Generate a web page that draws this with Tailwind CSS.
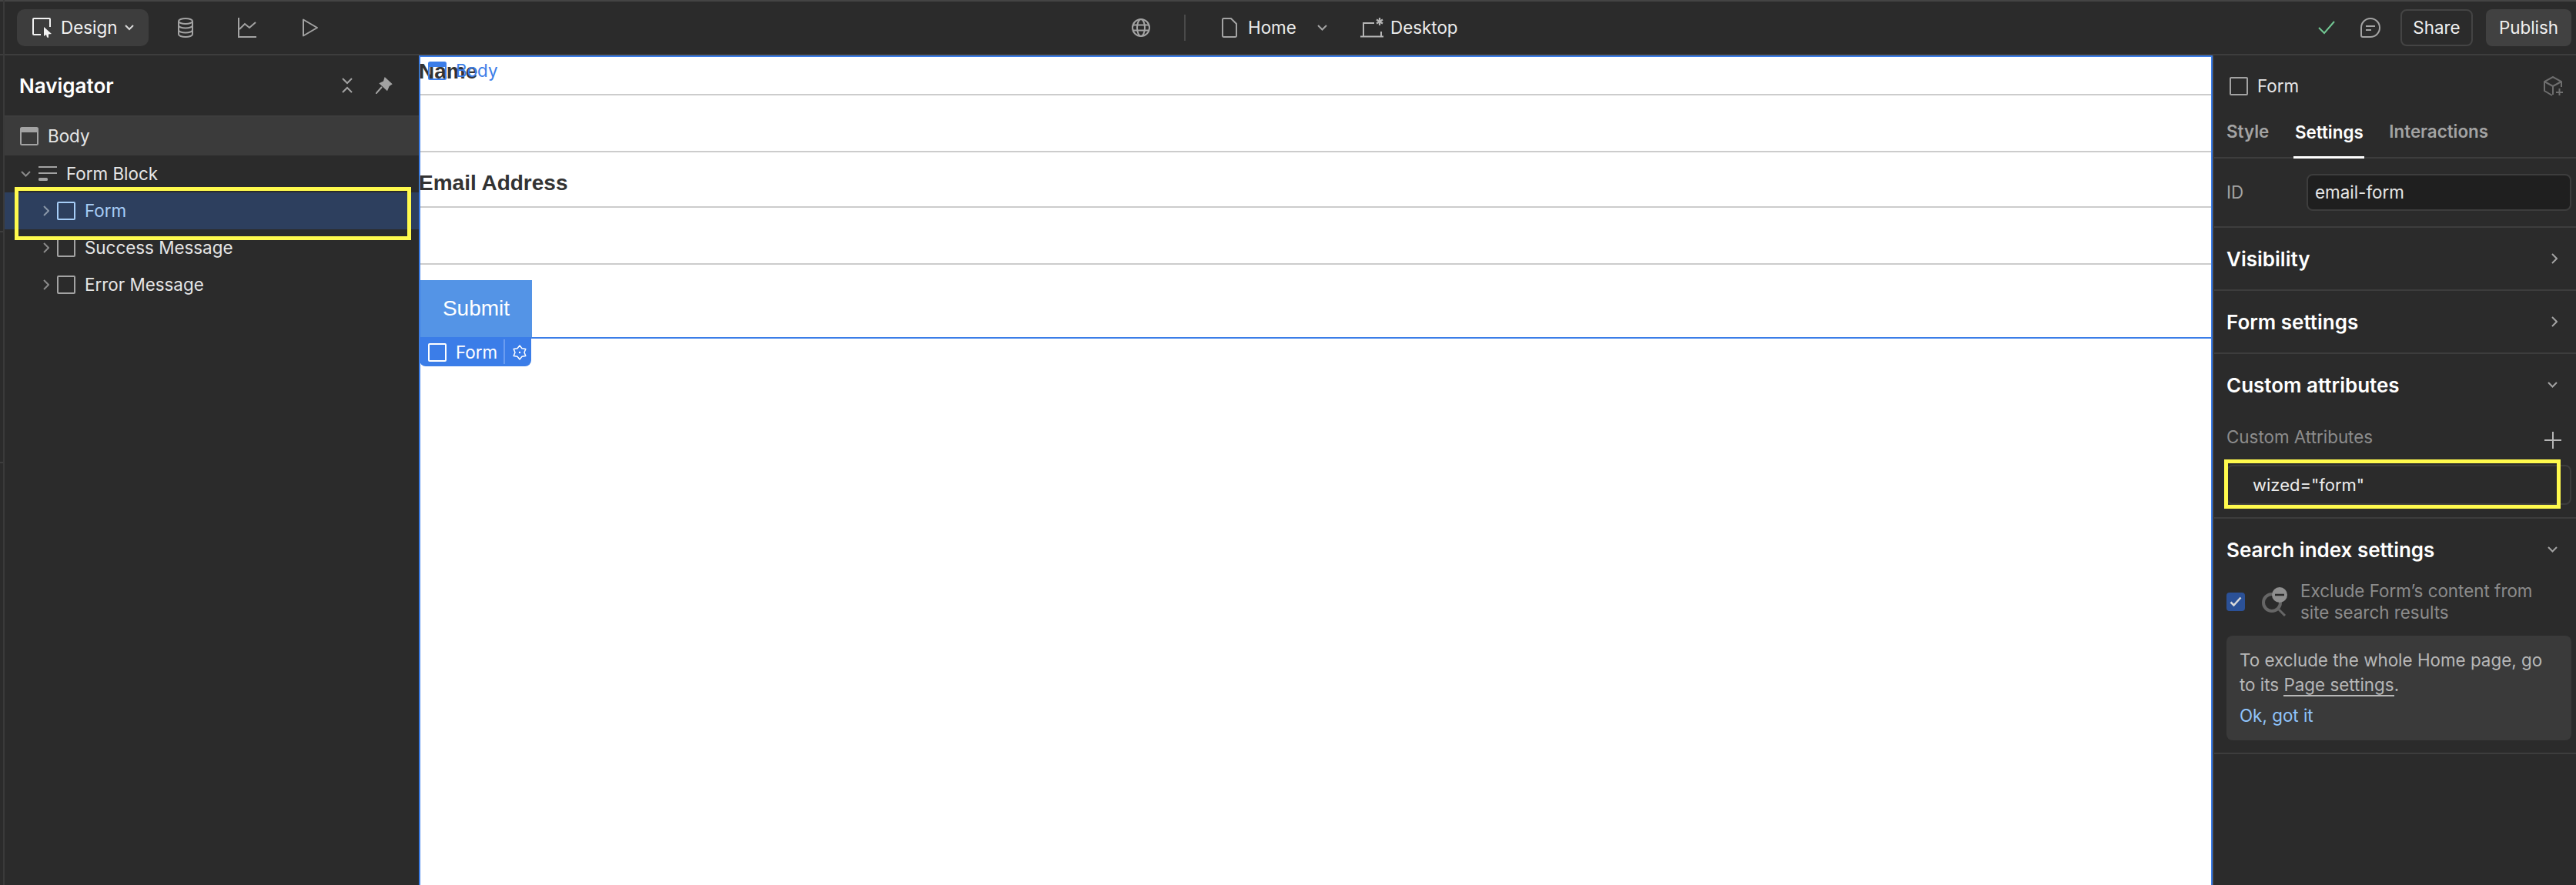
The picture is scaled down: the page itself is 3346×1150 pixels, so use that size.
<!DOCTYPE html>
<html>
<head>
<meta charset="utf-8">
<script src="https://cdn.jsdelivr.net/npm/@tailwindcss/browser@4"></script>
</head>
<body class="m-0 bg-[#2b2b2b]">
<div class="relative flex w-[3346px] h-[1150px] overflow-hidden bg-[#2b2b2b] text-[22.4px] text-[#e6e6e6] font-['Inter',sans-serif]">
  <div class="w-[6px] shrink-0 border-r-2 border-[#3a3a3a] flex flex-col">
    <div class="h-[2px] bg-[#444444]"></div>
    <div class="h-[68px]"></div>
    <div class="h-[2px] bg-[#3d3d3d]"></div>
    <div class="h-[228px]"></div>
    <div class="h-[2px] bg-[#3d3d3d]"></div>
    <div class="h-[298px]"></div>
    <div class="h-[2px] bg-[#3d3d3d]"></div>
  </div>
  <div class="flex flex-col flex-1 min-w-0">
    <!-- top bar -->
    <header class="relative flex items-center h-[72px] shrink-0 border-t-2 border-b-2 border-t-[#444444] border-b-[#3d3d3d]">
      <div class="flex items-center h-[48px] w-[171px] ml-[16px] pl-[20px] rounded-[10px] bg-[#3d3d3d] text-[#f2f2f2]">
        <svg width="26" height="26" viewBox="0 0 26 26" fill="none"><path d="M11 22H2a1 1 0 0 1-1-1V2a1 1 0 0 1 1-1h20a1 1 0 0 1 1 1v10" stroke="#f2f2f2" stroke-width="2"/><path d="M15 12l10 9-4 .5V26l-2-.5-1-3.500-3 2z" fill="#f2f2f2"/></svg>
        <span class="ml-[11px]">Design</span>
        <svg class="ml-[10px]" width="12" height="8" viewBox="0 0 12 8" fill="none"><path d="M1 1l5 5 5-5" stroke="#d9d9d9" stroke-width="2"/></svg>
      </div>
      <svg class="ml-[38px]" width="20" height="26" viewBox="0 0 20 26" fill="none" stroke="#a3a3a3" stroke-width="2"><ellipse cx="10" cy="4.500" rx="9" ry="3.500"/><path d="M1 4.500v17c0 2 4 3.500 9 3.500s9-1.500 9-3.500v-17M1 10c0 2 4 3.500 9 3.500s9-1.500 9-3.500M1 16c0 2 4 3.500 9 3.500s9-1.500 9-3.500"/></svg>
      <svg class="ml-[58px]" width="24" height="26" viewBox="0 0 24 26" fill="none" stroke="#a3a3a3" stroke-width="2"><path d="M1 0v25h23M2 15l7-7 6 5 8-7"/></svg>
      <svg class="ml-[60px]" width="20" height="24" viewBox="0 0 20 24" fill="none" stroke="#a3a3a3" stroke-width="2"><path d="M1 1.500v21L19 12z" stroke-linejoin="round"/></svg>
      <div class="absolute left-[1464px] top-0 h-full flex items-center">
        <svg width="24" height="24" viewBox="0 0 24 24" fill="none" stroke="#a3a3a3" stroke-width="2"><circle cx="12" cy="12" r="11"/><ellipse cx="12" cy="12" rx="5" ry="11"/><path d="M1.500 8.500h21M1.500 15.500h21"/></svg>
        <div class="w-[2px] h-[34px] bg-[#4a4a4a] ml-[44px]"></div>
        <svg class="ml-[47px]" width="20" height="26" viewBox="0 0 20 26" fill="none" stroke="#a3a3a3" stroke-width="2"><path d="M2.500 1H12l7 7v15.500a1.500 1.500 0 0 1-1.500 1.500h-15A1.500 1.500 0 0 1 1 23.500v-21A1.500 1.500 0 0 1 2.500 1z"/></svg>
        <span class="ml-[14px] w-[64px] text-[#ececec]">Home</span>
        <svg class="ml-[26px]" width="13" height="8" viewBox="0 0 13 8" fill="none"><path d="M1 1l5.500 5.500L12 1" stroke="#a3a3a3" stroke-width="2"/></svg>
        <svg class="ml-[43px]" width="30" height="26" viewBox="0 0 30 26" fill="none" stroke="#b5b5b5" stroke-width="2"><path d="M4 24V7h14M0 24.500h30M27 18v6"/><path d="M25 0v10M21 2.500l8 5M29 2.500l-8 5" stroke-width="2.200"/></svg>
        <span class="ml-[9px] text-[#ececec]">Desktop</span>
      </div>
      <div class="absolute right-[6px] top-0 h-full flex items-center">
        <svg width="22" height="18" viewBox="0 0 22 18" fill="none"><path d="M1 9l7 7L21 1" stroke="#72c793" stroke-width="2"/></svg>
        <svg class="ml-[33px]" width="26" height="26" viewBox="0 0 26 26" fill="none" stroke="#a3a3a3" stroke-width="2"><path d="M13 1a12 12 0 1 1 0 24H3a2 2 0 0 1-2-2V13A12 12 0 0 1 13 1zM7 11h12M7 16h7"/></svg>
        <div class="ml-[26px] flex items-center justify-center w-[94px] h-[48px] rounded-[8px] border-2 border-[#444444] text-[#f0f0f0]">Share</div>
        <div class="ml-[17px] flex items-center justify-center w-[111px] h-[48px] rounded-[8px] bg-[#414141] text-[#f0f0f0]">Publish</div>
      </div>
    </header>
    <div class="flex flex-1 min-h-0">
      <!-- navigator -->
      <aside class="w-[538px] shrink-0 flex flex-col">
        <div class="flex items-center h-[80px] pl-[19px] pr-[34px] border-b-2 border-[#3d3d3d]">
          <span class="font-semibold text-white text-[26px]">Navigator</span>
          <svg class="ml-auto" width="14" height="20" viewBox="0 0 14 20" fill="none" stroke="#a3a3a3" stroke-width="2"><path d="M1 1l6 6 6-6M1 19l6-6 6 6"/></svg>
          <svg class="ml-[30px]" width="22" height="22" viewBox="0 0 22 22" fill="none"><path d="M11.700 0l10 9.300-4 2.700-2.700 6.300L4.300 8.300 10 5.500z" fill="#a3a3a3"/><path d="M8 13l-8 9" stroke="#a3a3a3" stroke-width="2"/></svg>
        </div>
        <div class="flex items-center h-[50px] pl-[20px] bg-[#3b3b3b]">
          <svg width="24" height="24" viewBox="0 0 24 24" fill="none"><rect x="1" y="1" width="22" height="22" rx="1.500" stroke="#a3a3a3" stroke-width="2"/><rect x="1" y="1" width="22" height="6" fill="#a3a3a3"/></svg>
          <span class="ml-[12px]">Body</span>
        </div>
        <div class="flex items-center h-[48px] pl-[21px]">
          <svg width="13" height="8" viewBox="0 0 13 8" fill="none"><path d="M1 1l5.500 5.500L12 1" stroke="#8a8a8a" stroke-width="2"/></svg>
          <svg class="ml-[10px]" width="24" height="20" viewBox="0 0 24 20" fill="none"><path d="M0 1h24M0 9h24" stroke="#a3a3a3" stroke-width="2"/><rect x="0" y="15" width="12" height="4" rx="1.500" fill="#a3a3a3"/></svg>
          <span class="ml-[12px]">Form Block</span>
        </div>
        <div class="flex items-center h-[48px] pl-[50px] bg-[#2d3f5e] text-[#a6cdf7]">
          <svg width="8" height="14" viewBox="0 0 8 14" fill="none"><path d="M1 1l6 6-6 6" stroke="#8a97a8" stroke-width="2"/></svg>
          <div class="ml-[10px] w-[24px] h-[24px] rounded-[2px] border-2 border-[#a6cdf7]"></div>
          <span class="ml-[12px]">Form</span>
        </div>
        <div class="flex items-center h-[48px] pl-[50px]">
          <svg width="8" height="14" viewBox="0 0 8 14" fill="none"><path d="M1 1l6 6-6 6" stroke="#8a8a8a" stroke-width="2"/></svg>
          <div class="ml-[10px] w-[24px] h-[24px] rounded-[2px] border-2 border-[#a3a3a3]"></div>
          <span class="ml-[12px]">Success Message</span>
        </div>
        <div class="flex items-center h-[48px] pl-[50px]">
          <svg width="8" height="14" viewBox="0 0 8 14" fill="none"><path d="M1 1l6 6-6 6" stroke="#8a8a8a" stroke-width="2"/></svg>
          <div class="ml-[10px] w-[24px] h-[24px] rounded-[2px] border-2 border-[#a3a3a3]"></div>
          <span class="ml-[12px]">Error Message</span>
        </div>
      </aside>
      <!-- canvas -->
      <main class="relative w-[2330px] shrink-0 bg-white border-x-2 border-t-2 border-[#3b7de8] font-['Liberation_Sans',sans-serif] text-[#333333]">
        <form class="relative border-b-2 border-[#3b7de8]">
          <div class="relative h-[38px] mb-[10px] -ml-[2px] flex items-center text-[28px] font-bold">Name</div>
          <div class="h-[76px] mb-[20px] border-y-2 border-[#cccccc]"></div>
          <div class="h-[40px] mb-[10px] -ml-[2px] flex items-center text-[28px] font-bold">Email Address</div>
          <div class="h-[76px] mb-[20px] border-y-2 border-[#cccccc]"></div>
          <div class="flex items-center justify-center w-[145px] h-[74px] bg-[#5494e6] text-white text-[28px]">Submit</div>
          <div class="absolute -left-[1px] top-full mt-[2px] flex items-center w-[145px] h-[36px] pl-[11px] rounded-b-[8px] bg-[#3b7de8] text-white font-['Inter',sans-serif]">
            <div class="w-[24px] h-[24px] rounded-[2px] border-2 border-white"></div>
            <span class="ml-[12px] w-[52px]">Form</span>
            <div class="ml-[10px] w-[2px] h-[32px] -mt-[3px] bg-[#6a9cf0]"></div>
            <svg class="ml-[10px]" width="18" height="20" viewBox="0 0 18 20" fill="none" stroke="#ffffff" stroke-width="1.500"><path d="M9 1l3 3.800 4.800.7L15 10l1.800 4.500-4.800.7L9 19l-3-3.800-4.800-.7L3 10 1.200 5.500 6 4.800z" stroke-linejoin="round"/><circle cx="9" cy="10" r="1.200" fill="#fff" stroke="none"/></svg>
          </div>
        </form>
        <div class="absolute left-[10px] top-0 flex items-center h-[36px] text-[#3b7de8] font-['Inter',sans-serif]">
          <svg width="24" height="24" viewBox="0 0 24 24" fill="none"><rect x="1" y="1" width="22" height="22" rx="1.500" stroke="#3b7de8" stroke-width="2"/><rect x="1" y="1" width="22" height="6" fill="#3b7de8"/></svg>
          <span class="ml-[12px]">Body</span>
        </div>
      </main>
      <!-- right panel -->
      <aside class="flex-1 min-w-0 flex flex-col border-l-2 border-[#3a3a3a]">
        <div class="flex items-center h-[62px] mt-[9px] pl-[20px] pr-[16px]">
          <div class="w-[24px] h-[24px] rounded-[2px] border-2 border-[#a3a3a3]"></div>
          <span class="ml-[12px]">Form</span>
          <svg class="ml-auto" width="26" height="26" viewBox="0 0 26 26" fill="none" stroke="#6e6e6e" stroke-width="2"><path d="M23 14V7L12 1 1 7v12l10 6M1 7l11 6 11-6M12 13v11M16 21h9M20.500 16v9"/></svg>
        </div>
        <div class="flex items-end h-[63px] pl-[16px] gap-[32px] border-b-2 border-[#3d3d3d] font-semibold text-[#a3a3a3]">
          <span class="pb-[16px]">Style</span>
          <span class="w-[92px] text-center pb-[14px] border-b-[3px] -mb-[2px] border-white text-white">Settings</span>
          <span class="pb-[16px]">Interactions</span>
        </div>
        <div class="flex items-center h-[90px] pl-[16px] pr-[6px] border-b-2 border-[#3d3d3d]">
          <span class="w-[104px] text-[#a3a3a3]">ID</span>
          <div class="flex items-center flex-1 h-[48px] pl-[9px] rounded-[8px] border-2 border-[#3d3d3d] bg-[#1f1f1f]">email-form</div>
        </div>
        <div class="flex items-center justify-between h-[82px] pl-[16px] pr-[24px] border-b-2 border-[#3d3d3d] font-semibold text-white text-[26px]">
          <span>Visibility</span>
          <svg width="8" height="14" viewBox="0 0 8 14" fill="none"><path d="M1 1l6 6-6 6" stroke="#a3a3a3" stroke-width="2"/></svg>
        </div>
        <div class="flex items-center justify-between h-[82px] pl-[16px] pr-[24px] border-b-2 border-[#3d3d3d] font-semibold text-white text-[26px]">
          <span>Form settings</span>
          <svg width="8" height="14" viewBox="0 0 8 14" fill="none"><path d="M1 1l6 6-6 6" stroke="#a3a3a3" stroke-width="2"/></svg>
        </div>
        <div class="h-[214px] pl-[16px] pr-[6px] border-b-2 border-[#3d3d3d]">
          <div class="flex items-center justify-between h-[80px] pr-[18px] font-semibold text-white text-[26px]">
            <span>Custom attributes</span>
            <svg width="13" height="8" viewBox="0 0 13 8" fill="none"><path d="M1 1l5.500 5.500L12 1" stroke="#a3a3a3" stroke-width="2"/></svg>
          </div>
          <div class="flex items-center justify-between h-[24px] mt-[16px] pr-[13px] text-[#8c8c8c]">
            <span>Custom Attributes</span>
            <svg class="mt-[8px]" width="22" height="22" viewBox="0 0 22 22" fill="none"><path d="M11 0v22M0 11h22" stroke="#b5b5b5" stroke-width="2"/></svg>
          </div>
          <div class="flex items-center h-[52px] mt-[24px] pl-[32px] rounded-[8px] border-2 border-[#3d3d3d] text-[22px] text-[#ececec]">wized="form"</div>
        </div>
        <div class="pl-[16px] pr-[6px]">
          <div class="flex items-center justify-between h-[80px] pr-[18px] font-semibold text-white text-[26px]">
            <span>Search index settings</span>
            <svg width="13" height="8" viewBox="0 0 13 8" fill="none"><path d="M1 1l5.500 5.500L12 1" stroke="#a3a3a3" stroke-width="2"/></svg>
          </div>
          <div class="flex items-center">
            <div class="flex items-center justify-center w-[24px] h-[24px] rounded-[4px] bg-[#2b5197]">
              <svg width="16" height="14" viewBox="0 0 16 14" fill="none"><path d="M1.500 7.500l4 4 9-10" stroke="#d9d9d9" stroke-width="2.500"/></svg>
            </div>
            <svg class="ml-[21px]" width="34" height="38" viewBox="0 0 34 38" fill="none"><circle cx="14" cy="20" r="11" stroke="#666666" stroke-width="4"/><path d="M23 29l8 8" stroke="#666666" stroke-width="3"/><circle cx="24" cy="10" r="10" fill="#8f8f8f"/><path d="M18 10h12" stroke="#2b2b2b" stroke-width="2.500"/></svg>
            <div class="ml-[17px] text-[#8c8c8c] leading-[28px]">Exclude Form’s content from<br>site search results</div>
          </div>
          <div class="mt-[16px] h-[136px] pl-[17px] pt-[16px] rounded-[8px] bg-[#3a3a3a] text-[#b8b8b8] leading-[32px]">
            To exclude the whole Home page, go<br>to its <span class="border-b-2 border-[#b8b8b8]">Page settings</span>.
            <div class="mt-[8px] text-[#8fc3fa]">Ok, got it</div>
          </div>
        </div>
        <div class="mt-[16px] h-[2px] bg-[#3d3d3d]"></div>
      </aside>
    </div>
  </div>
  <!-- annotation highlights -->
  <div class="absolute left-[19px] top-[243px] w-[515px] h-[69px] border-[5px] border-[#fffa4d]"></div>
  <div class="absolute left-[2889px] top-[597px] w-[437px] h-[64px] border-[5px] border-[#fffa4d]"></div>
</div>
</body>
</html>
